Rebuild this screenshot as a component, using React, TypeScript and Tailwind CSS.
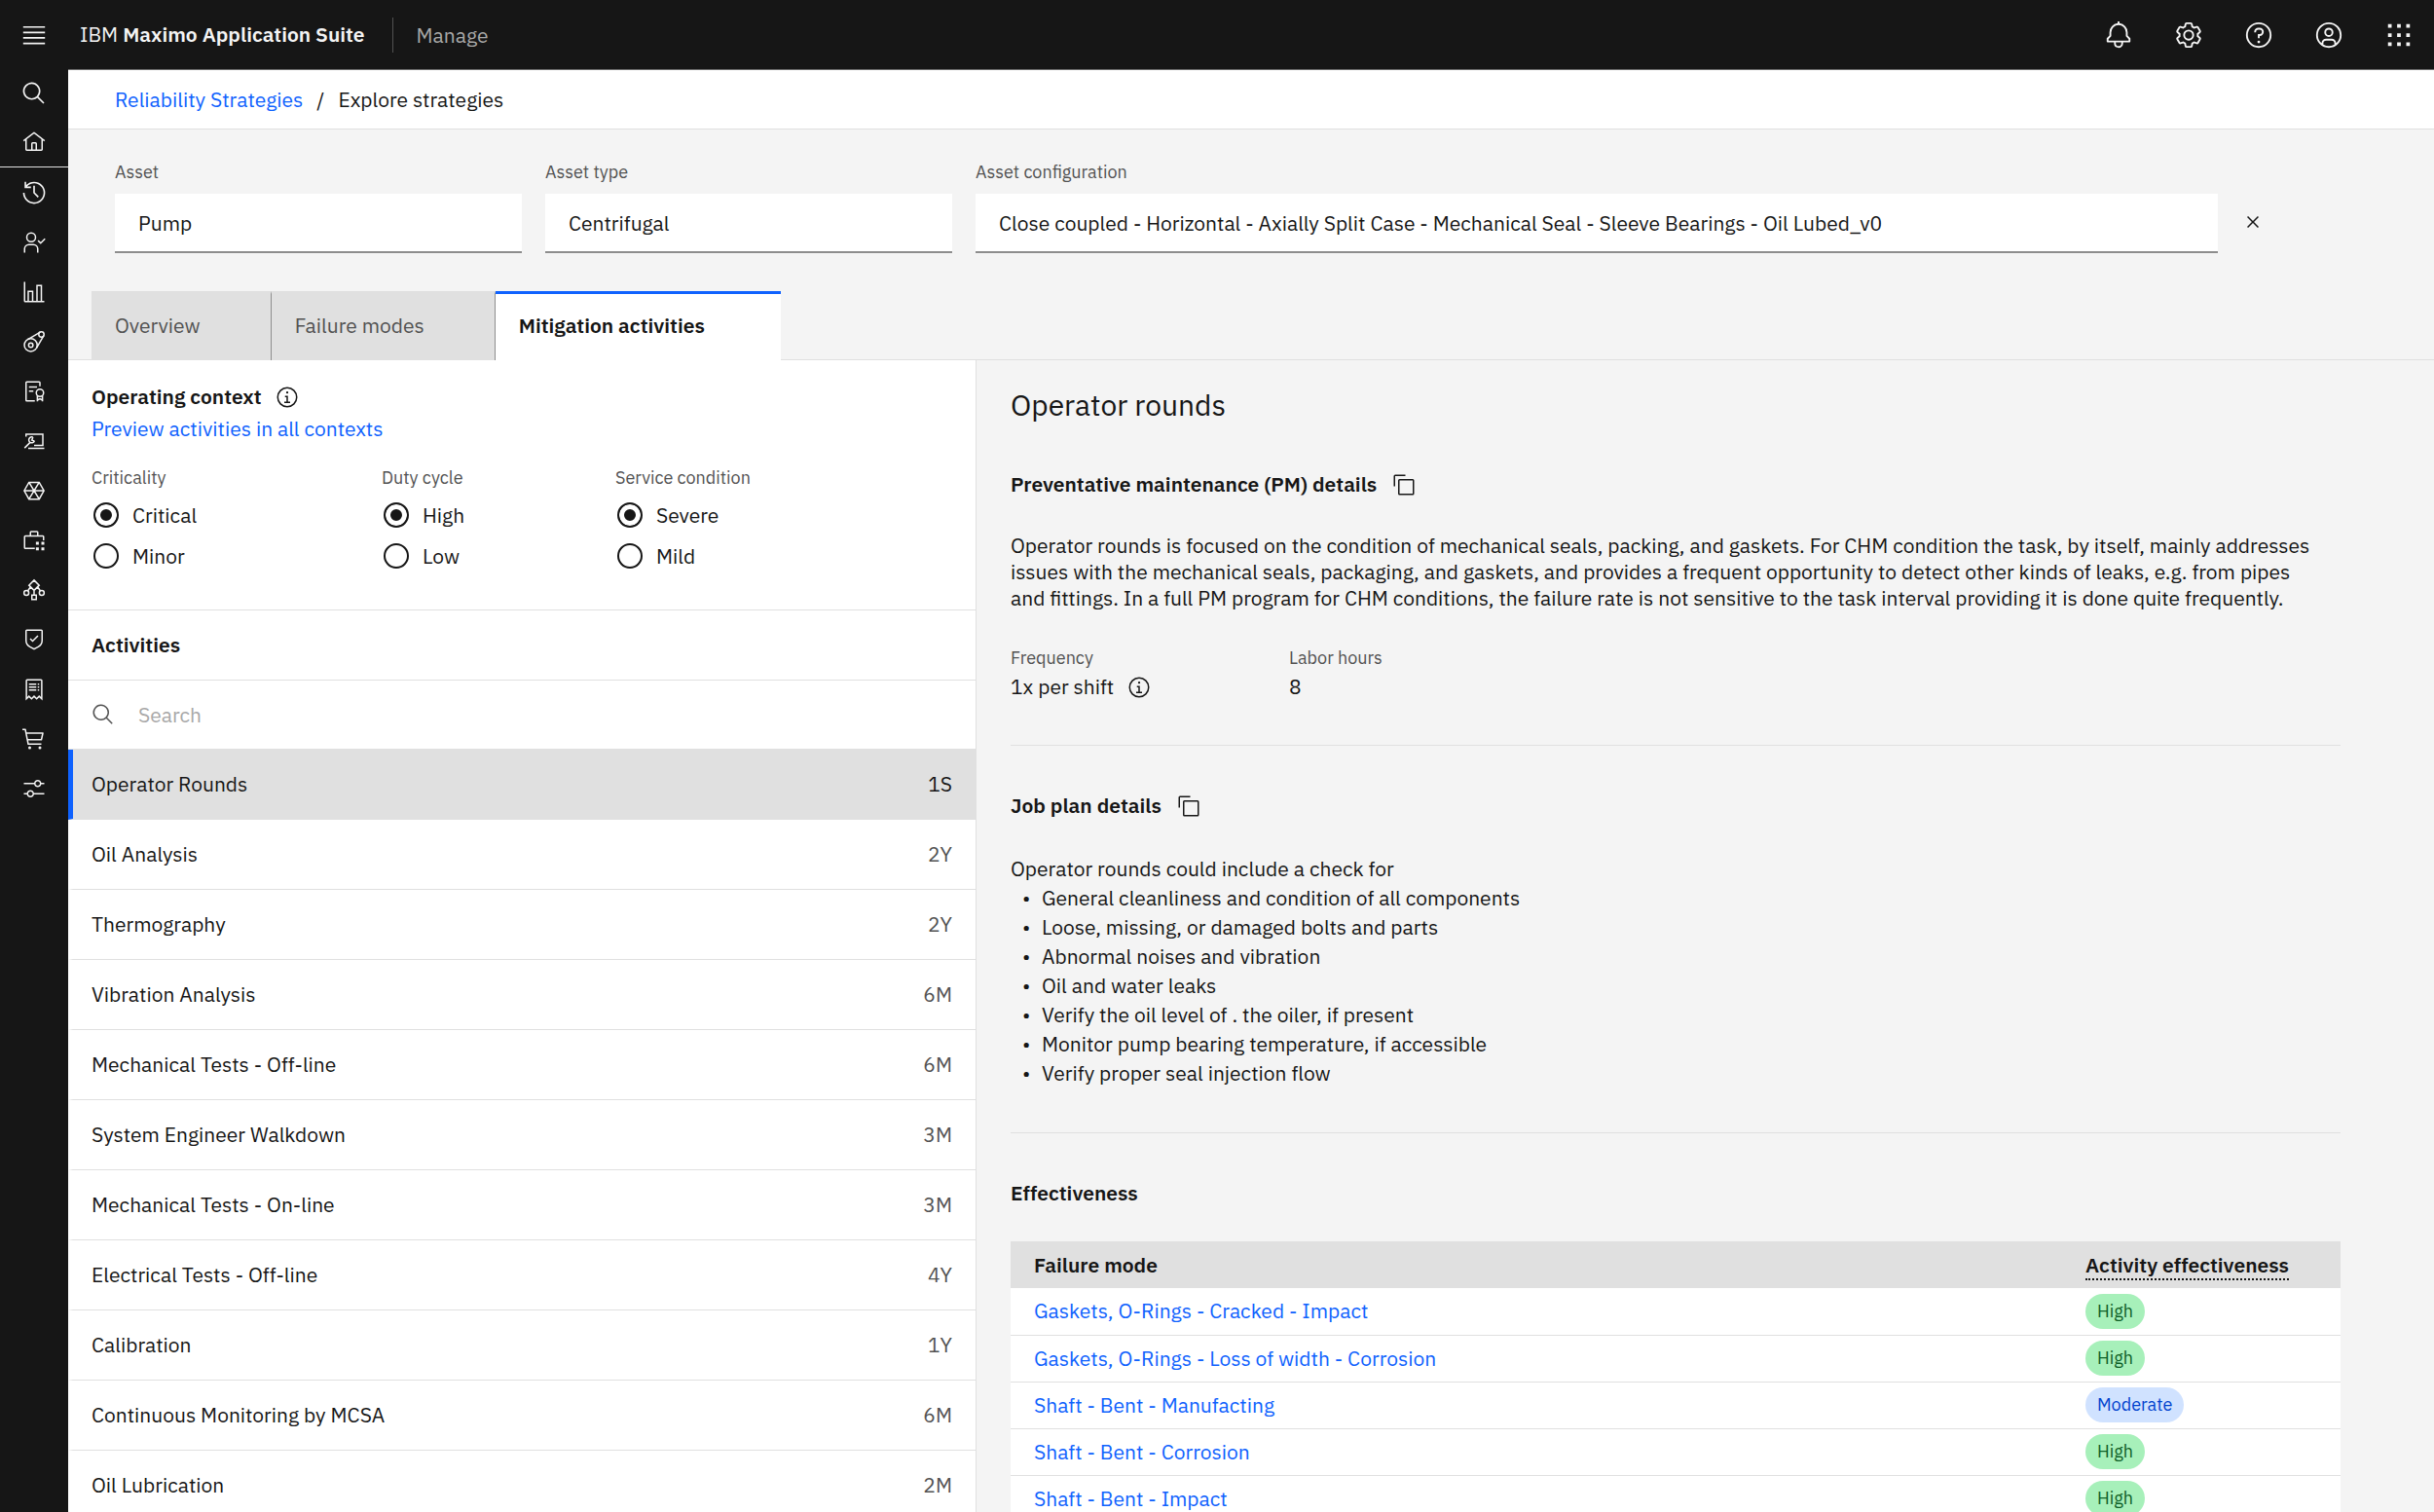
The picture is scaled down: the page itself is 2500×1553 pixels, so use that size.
import { useState } from "react";
import type { ReactNode } from "react";
import { clsx } from "clsx";

interface Activity {
  name: string;
  interval: string;
}

const activities: Activity[] = [
  { name: "Operator Rounds", interval: "1S" },
  { name: "Oil Analysis", interval: "2Y" },
  { name: "Thermography", interval: "2Y" },
  { name: "Vibration Analysis", interval: "6M" },
  { name: "Mechanical Tests - Off-line", interval: "6M" },
  { name: "System Engineer Walkdown", interval: "3M" },
  { name: "Mechanical Tests - On-line", interval: "3M" },
  { name: "Electrical Tests - Off-line", interval: "4Y" },
  { name: "Calibration", interval: "1Y" },
  { name: "Continuous Monitoring by MCSA", interval: "6M" },
  { name: "Oil Lubrication", interval: "2M" },
];

const checks = [
  "General cleanliness and condition of all components",
  "Loose, missing, or damaged bolts and parts",
  "Abnormal noises and vibration",
  "Oil and water leaks",
  "Verify the oil level of . the oiler, if present",
  "Monitor pump bearing temperature, if accessible",
  "Verify proper seal injection flow",
];

const failureModes = [
  { name: "Gaskets, O-Rings - Cracked - Impact", level: "High" },
  { name: "Gaskets, O-Rings - Loss of width - Corrosion", level: "High" },
  { name: "Shaft - Bent - Manufacting", level: "Moderate" },
  { name: "Shaft - Bent - Corrosion", level: "High" },
  { name: "Shaft - Bent - Impact", level: "High" },
];

const tabs = ["Overview", "Failure modes", "Mitigation activities"];

function Icon({ children, className = "size-6" }: { children: ReactNode; className?: string }) {
  return (
    <svg viewBox="0 0 32 32" fill="currentColor" aria-hidden="true" className={clsx("shrink-0", className)}>
      {children}
    </svg>
  );
}

function LineIcon({ children, className = "size-6" }: { children: ReactNode; className?: string }) {
  return (
    <svg
      viewBox="0 0 32 32"
      fill="none"
      stroke="currentColor"
      strokeWidth={2}
      aria-hidden="true"
      className={clsx("shrink-0", className)}
    >
      {children}
    </svg>
  );
}

function SearchIcon({ className }: { className?: string }) {
  return (
    <Icon className={className}>
      <path d="M29,27.5859l-7.5521-7.5521a11.0177,11.0177,0,1,0-1.4141,1.4141L27.5859,29ZM4,13a9,9,0,1,1,9,9A9.01,9.01,0,0,1,4,13Z" />
    </Icon>
  );
}

function InfoIcon() {
  return (
    <Icon>
      <path d="M17 22L17 14 13 14 13 16 15 16 15 22 12 22 12 24 20 24 20 22 17 22z" />
      <path d="M16,8a1.5,1.5,0,1,0,1.5,1.5A1.5,1.5,0,0,0,16,8Z" />
      <path d="M16,30A14,14,0,1,1,30,16,14,14,0,0,1,16,30ZM16,4A12,12,0,1,0,28,16,12,12,0,0,0,16,4Z" />
    </Icon>
  );
}

function CopyIcon() {
  return (
    <Icon>
      <path d="M28,10V28H10V10H28m0-2H10a2,2,0,0,0-2,2V28a2,2,0,0,0,2,2H28a2,2,0,0,0,2-2V10a2,2,0,0,0-2-2Z" />
      <path d="M4,18H2V4A2,2,0,0,1,4,2H18V4H4Z" />
    </Icon>
  );
}

const railItems: { label: string; icon: ReactNode }[] = [
  {
    label: "Recent",
    icon: (
      <Icon className="size-[26px]">
        <path d="M20.59 22L15 16.41 15 7 17 7 17 15.58 22 20.59 20.59 22z" />
        <path d="M16,2A13.94,13.94,0,0,0,6,6.23V2H4v8h8V8H7.08A12,12,0,1,1,4,16H2A14,14,0,1,0,16,2Z" />
      </Icon>
    ),
  },
  {
    label: "Assignments",
    icon: (
      <LineIcon>
        <circle cx="12" cy="9" r="6" />
        <path d="M3 30v-5a6 6 0 0 1 6-6h6a6 6 0 0 1 6 6v5M21.5 13.5l3.5 3.5 6-6" />
      </LineIcon>
    ),
  },
  {
    label: "Reports",
    icon: (
      <Icon>
        <path d="M27,28V6H19V28H15V14H7V28H4V2H2V28a2,2,0,0,0,2,2H30V28ZM13,28H9V16h4Zm12,0H21V8h4Z" />
      </Icon>
    ),
  },
  {
    label: "Assets",
    icon: (
      <LineIcon>
        <circle cx="11.5" cy="20.5" r="8.8" />
        <circle cx="11.5" cy="20.5" r="3" />
        <circle cx="26" cy="6" r="3.6" />
        <path d="M7.5 12.7L24.5 2.7M19.4 24.5L29.3 7.5" />
      </LineIcon>
    ),
  },
  {
    label: "Contracts",
    icon: (
      <LineIcon>
        <path d="M24 9V4a1 1 0 0 0-1-1H6a1 1 0 0 0-1 1v24a1 1 0 0 0 1 1h11M9 10h11M9 15.5h6" />
        <circle cx="24" cy="18" r="5" />
        <path d="M20.5 22v7.5M27.5 22v7.5M20.5 28l3.5-2 3.5 2" />
      </LineIcon>
    ),
  },
  {
    label: "Work orders",
    icon: (
      <LineIcon>
        <path d="M5 10V6.5h23V22H16M8 26h22M3 25.500l8-8" />
        <path d="M14.500 10.800a4 4 0 1 0 2 5.200M14.500 10.800l-1.500 4 3.500 1.200" />
      </LineIcon>
    ),
  },
  {
    label: "Inventory",
    icon: (
      <LineIcon>
        <path d="M2.5 16L9 4.5h14L29.5 16 23 27.5H9zM2.5 16h27M9 4.5l14 23M23 4.5l-14 23" />
      </LineIcon>
    ),
  },
  {
    label: "Tools",
    icon: (
      <LineIcon>
        <path d="M17 27H4a1 1 0 0 1-1-1V11a1 1 0 0 1 1-1h24a1 1 0 0 1 1 1v5M11 10V5a1 1 0 0 1 1-1h8a1 1 0 0 1 1 1v5" />
        <path d="M18.5 18h4v4h-4zM26 18h4v4h-4zM18.5 25.5h4v4h-4zM26 25.5h4v4h-4z" fill="currentColor" stroke="none" />
      </LineIcon>
    ),
  },
  {
    label: "Planning",
    icon: (
      <LineIcon>
        <path d="M16 2.5L23 9.5 16 16.5 9 9.5zM16 16.5V23M11 12L7.5 17M21 12l3.5 5M13 23h6v6h-6z" />
        <circle cx="5.5" cy="20" r="3.3" />
        <circle cx="26.5" cy="20" r="3.3" />
      </LineIcon>
    ),
  },
  {
    label: "Safety",
    icon: (
      <Icon>
        <path d="M14 16.59L11.41 14 10 15.41 14 19.41 22 11.41 20.59 10 14 16.59z" />
        <path d="M16,30,9.8242,26.7071A10.9815,10.9815,0,0,1,4,17V4A2.0021,2.0021,0,0,1,6,2H26a2.0021,2.0021,0,0,1,2,2V17a10.9815,10.9815,0,0,1-5.8242,9.7069ZM6,4V17a8.9852,8.9852,0,0,0,4.7656,7.9423L16,27.7333l5.2344-2.791A8.9852,8.9852,0,0,0,26,17V4Z" />
      </Icon>
    ),
  },
  {
    label: "Financial",
    icon: (
      <LineIcon>
        <path d="M5.5 29V4a1 1 0 0 1 1-1h19a1 1 0 0 1 1 1v25l-3.5-3.5-3.5 3.5-3.5-3.5-3.500 3.5-3.500-3.500z" />
        <path d="M9 9h10M9 13h10M9 17h10M21 9h2M21 13h2M21 17h2" />
      </LineIcon>
    ),
  },
  {
    label: "Purchasing",
    icon: (
      <Icon>
        <circle cx="10" cy="28" r="2" />
        <circle cx="24" cy="28" r="2" />
        <path d="M28,7H5.82L5,2.8A1,1,0,0,0,4,2H0V4H3.18L7,23.2A1,1,0,0,0,8,24H26V22H8.82L8,18H26a1,1,0,0,0,1-.78l2-9A1,1,0,0,0,28,7ZM25.2,16H7.62L6.22,9H26.75Z" />
      </Icon>
    ),
  },
  {
    label: "Administration",
    icon: (
      <Icon>
        <path d="M30 8h-4.1c-.5-2.3-2.5-4-4.9-4s-4.4 1.7-4.9 4H2v2h14.1c.5 2.3 2.5 4 4.9 4s4.4-1.7 4.9-4H30V8zM21 12c-1.7 0-3-1.3-3-3s1.3-3 3-3 3 1.3 3 3S22.7 12 21 12zM2 24h4.1c.5 2.3 2.5 4 4.9 4s4.4-1.7 4.9-4H30v-2H15.9c-.5-2.3-2.5-4-4.9-4s-4.4 1.7-4.9 4H2V24zM11 20c1.7 0 3 1.3 3 3s-1.3 3-3 3-3-1.3-3-3S9.3 20 11 20z" />
      </Icon>
    ),
  },
];

const headerActions: { label: string; icon: ReactNode }[] = [
  {
    label: "Notifications",
    icon: (
      <path d="M28.7071,19.293,26,16.5859V13a10.0136,10.0136,0,0,0-9-9.9492V1H15V3.0508A10.0136,10.0136,0,0,0,6,13v3.5859L3.2929,19.293A1,1,0,0,0,3,20v3a1,1,0,0,0,1,1h7v.7768a5.152,5.152,0,0,0,4.5,5.1987A5.0057,5.0057,0,0,0,21,25V24h7a1,1,0,0,0,1-1V20A1,1,0,0,0,28.7071,19.293ZM19,25a3,3,0,0,1-6,0V24h6Zm8-3H5V20.4141L7.707,17.707A1,1,0,0,0,8,17V13a8,8,0,0,1,16,0v4a1,1,0,0,0,.293.707L27,20.4141Z" />
    ),
  },
  {
    label: "Settings",
    icon: (
      <>
        <path d="M27,16.76c0-.25,0-.5,0-.76s0-.51,0-.77l1.92-1.68A2,2,0,0,0,29.3,11L26.94,7a2,2,0,0,0-1.73-1,2,2,0,0,0-.64.1l-2.43.82a11.35,11.35,0,0,0-1.31-.75l-.51-2.52a2,2,0,0,0-2-1.61H13.64a2,2,0,0,0-2,1.61l-.51,2.52a11.48,11.48,0,0,0-1.32.75L7.43,6.06A2,2,0,0,0,6.79,6,2,2,0,0,0,5.06,7L2.7,11a2,2,0,0,0,.41,2.51L5,15.24c0,.25,0,.5,0,.76s0,.51,0,.77L3.11,18.45A2,2,0,0,0,2.7,21L5.06,25a2,2,0,0,0,1.73,1,2,2,0,0,0,.64-.1l2.43-.82a11.35,11.35,0,0,0,1.31.75l.51,2.52a2,2,0,0,0,2,1.61h4.72a2,2,0,0,0,2-1.61l.51-2.52a11.48,11.48,0,0,0,1.32-.75l2.42.82a2,2,0,0,0,.64.1,2,2,0,0,0,1.73-1L29.3,21a2,2,0,0,0-.41-2.51ZM25.21,24l-3.43-1.16a8.86,8.86,0,0,1-2.71,1.57L18.36,28H13.64l-.71-3.55a9.36,9.36,0,0,1-2.7-1.57L6.79,24,4.43,20l2.72-2.4a8.9,8.9,0,0,1,0-3.13L4.43,12,6.79,8l3.43,1.16a8.86,8.86,0,0,1,2.71-1.57L13.64,4h4.72l.71,3.55a9.36,9.36,0,0,1,2.7,1.57L25.21,8,27.57,12l-2.72,2.4a8.9,8.9,0,0,1,0,3.13L27.57,20Z" />
        <path d="M16,22a6,6,0,1,1,6-6A5.94,5.94,0,0,1,16,22Zm0-10a3.91,3.91,0,0,0-4,4,3.91,3.91,0,0,0,4,4,3.91,3.91,0,0,0,4-4A3.91,3.91,0,0,0,16,12Z" />
      </>
    ),
  },
  {
    label: "Help",
    icon: (
      <>
        <path d="M16,2A14,14,0,1,0,30,16,14,14,0,0,0,16,2Zm0,26A12,12,0,1,1,28,16,12,12,0,0,1,16,28Z" />
        <circle cx="16" cy="23.5" r="1.5" />
        <path d="M17,8H15.5A4.49,4.49,0,0,0,11,12.5V13h2v-.5A2.5,2.5,0,0,1,15.5,10H17a2.5,2.5,0,0,1,0,5H15v4.5h2V17a4.5,4.5,0,0,0,0-9Z" />
      </>
    ),
  },
  {
    label: "Account",
    icon: (
      <>
        <path d="M16,8a5,5,0,1,0,5,5A5,5,0,0,0,16,8Zm0,8a3,3,0,1,1,3-3A3.0034,3.0034,0,0,1,16,16Z" />
        <path d="M16,2A14,14,0,1,0,30,16,14.0158,14.0158,0,0,0,16,2ZM10,26.3765V25a3.0033,3.0033,0,0,1,3-3h6a3.0033,3.0033,0,0,1,3,3v1.3765a11.8989,11.8989,0,0,1-12,0Zm13.9925-1.4507A5.0016,5.0016,0,0,0,19,20H13a5.0016,5.0016,0,0,0-4.9925,4.9258,12,12,0,1,1,15.985,0Z" />
      </>
    ),
  },
  {
    label: "App switcher",
    icon: (
      <path d="M14 4h4v4h-4zM4 4h4v4H4zM24 4h4v4h-4zM14 14h4v4h-4zM4 14h4v4H4zM24 14h4v4h-4zM14 24h4v4h-4zM4 24h4v4H4zM24 24h4v4h-4z" />
    ),
  },
];

function Field({ id, label, value, className }: { id: string; label: string; value: string; className?: string }) {
  return (
    <div className={className}>
      <label htmlFor={id} className="block text-lg leading-6 text-[#525252]">
        {label}
      </label>
      <input
        id={id}
        type="text"
        defaultValue={value}
        className="mt-[10px] h-[61px] w-full border-b-2 border-[#8d8d8d] bg-white px-6 outline-none focus:border-[#0f62fe]"
      />
    </div>
  );
}

function RadioGroup({ legend, options, className }: { legend: string; options: string[]; className?: string }) {
  const [value, setValue] = useState(options[0]);
  return (
    <fieldset className={className}>
      <legend className="text-lg leading-6 text-[#525252]">{legend}</legend>
      <div className="mt-3 flex flex-col gap-[14px]">
        {options.map((option) => (
          <label key={option} className="flex items-center gap-[14px] leading-7">
            <input
              type="radio"
              name={legend}
              checked={value === option}
              onChange={() => setValue(option)}
              className="ml-[2px] size-[26px] appearance-none rounded-full border-2 border-[#161616] checked:bg-[#161616] checked:shadow-[inset_0_0_0_5px_#fff]"
            />
            {option}
          </label>
        ))}
      </div>
    </fieldset>
  );
}

export default function App() {
  const [tab, setTab] = useState("Mitigation activities");
  const [selected, setSelected] = useState("Operator Rounds");
  const [query, setQuery] = useState("");

  const visible = activities.filter((a) => a.name.toLowerCase().includes(query.toLowerCase()));

  return (
    <div className="flex h-screen flex-col overflow-hidden bg-[#f4f4f4] font-['IBM_Plex_Sans','Roboto',sans-serif] text-[21px] leading-[27px] text-[#161616]">
      {/* Header */}
      <header className="flex h-[71px] shrink-0 items-center bg-[#161616] text-[#f4f4f4]">
        <button aria-label="Menu" className="flex w-[70px] justify-center">
          <svg viewBox="0 0 20 20" fill="currentColor" className="size-7">
            <path d="M2 15.5H18V16.7H2zM2 11.5H18V12.7H2zM2 7.5H18V8.7H2zM2 3.5H18V4.7H2z" />
          </svg>
        </button>
        <a href="#" className="pr-7 pl-3">
          IBM <span className="font-semibold">Maximo Application Suite</span>
        </a>
        <span className="h-9 border-l border-[#525252] pl-6 leading-9 text-[#a8a8a8]">Manage</span>
        <div className="ml-auto flex">
          {headerActions.map((action) => (
            <button key={action.label} aria-label={action.label} className="flex w-[72px] justify-center">
              <Icon className="size-[30px]">{action.icon}</Icon>
            </button>
          ))}
        </div>
      </header>

      <div className="flex min-h-0 flex-1">
        {/* Side rail */}
        <nav className="flex w-[70px] shrink-0 flex-col bg-[#161616] text-[#f4f4f4]">
          <button aria-label="Search" className="flex h-[50px] items-center justify-center">
            <SearchIcon className="size-[26px]" />
          </button>
          <button aria-label="Home" className="flex h-[50px] items-center justify-center">
            <Icon>
              <path d="M16.6123,2.2138a1.01,1.01,0,0,0-1.2427,0L1,13.4194l1.2427,1.5717L4,13.6209V26a2.0041,2.0041,0,0,0,2,2H26a2.0037,2.0037,0,0,0,2-2V13.63L29.7573,15,31,13.4282ZM18,26H14V18h4Zm2,0V18a2.0023,2.0023,0,0,0-2-2H14a2.002,2.002,0,0,0-2,2v8H6V12.0615l10-7.79,10,7.8005V26Z" />
            </Icon>
          </button>
          <div className="border-t border-[#e0e0e0]">
            {railItems.map((item) => (
              <button key={item.label} aria-label={item.label} className="flex h-[51px] w-full items-center justify-center">
                {item.icon}
              </button>
            ))}
          </div>
        </nav>

        <main className="flex min-w-0 flex-1 flex-col border-t border-[#6f6f6f]">
          <nav aria-label="Breadcrumb" className="flex h-[61px] shrink-0 items-center gap-[14px] border-b border-[#e0e0e0] bg-white px-12">
            <a href="#" className="text-[#0f62fe]">
              Reliability Strategies
            </a>
            <span>/</span>
            <span>Explore strategies</span>
          </nav>

          {/* Asset fields */}
          <div className="flex items-end gap-6 pt-8 pr-[174px] pl-12">
            <Field id="asset" label="Asset" value="Pump" className="w-[418px]" />
            <Field id="asset-type" label="Asset type" value="Centrifugal" className="w-[418px]" />
            <Field
              id="asset-configuration"
              label="Asset configuration"
              value="Close coupled - Horizontal - Axially Split Case - Mechanical Seal - Sleeve Bearings - Oil Lubed_v0"
              className="flex-1"
            />
            <button aria-label="Clear configuration" className="flex h-[61px] w-6 items-center pb-1">
              <Icon>
                <path d="M24 9.4L22.6 8 16 14.6 9.4 8 8 9.4 14.6 16 8 22.6 9.4 24 16 17.4 22.6 24 24 22.6 17.4 16 24 9.4z" />
              </Icon>
            </button>
          </div>

          {/* Tabs */}
          <div className="mt-[39px] border-b border-[#e0e0e0] px-6">
            <div role="tablist" className="-mb-px flex">
              {tabs.map((name) => (
                <button
                  key={name}
                  role="tab"
                  aria-selected={tab === name}
                  onClick={() => setTab(name)}
                  className={clsx(
                    "h-[71px] border-t-[3px] pb-1 pl-6 text-left",
                    tab === name
                      ? "border-t-[#0f62fe] bg-white pr-[78px] font-semibold"
                      : "border-r border-t-[#e0e0e0] border-r-[#8d8d8d] bg-[#e0e0e0] pr-[72px] text-[#525252]"
                  )}
                >
                  {name}
                </button>
              ))}
            </div>
          </div>

          <div className="flex min-h-0 flex-1">
            {/* Activities */}
            <section className="w-[933px] shrink-0 overflow-hidden border-r border-[#e0e0e0] bg-white">
              <div className="h-[257px] border-b border-[#e0e0e0] px-6 pt-6">
                <div className="flex items-center gap-[14px]">
                  <h2 className="font-semibold">Operating context</h2>
                  <button aria-label="About operating context">
                    <InfoIcon />
                  </button>
                </div>
                <a href="#" className="mt-[6px] block text-[#0f62fe]">
                  Preview activities in all contexts
                </a>
                <div className="mt-[25px] flex">
                  <RadioGroup legend="Criticality" options={["Critical", "Minor"]} className="w-[298px]" />
                  <RadioGroup legend="Duty cycle" options={["High", "Low"]} className="w-[240px]" />
                  <RadioGroup legend="Service condition" options={["Severe", "Mild"]} />
                </div>
              </div>
              <h2 className="flex h-[72px] items-center border-b border-[#e0e0e0] px-6 font-semibold">Activities</h2>
              <label className="flex h-[71px] items-center gap-6 border-b border-[#e0e0e0] px-6 text-[#525252]">
                <SearchIcon />
                <input
                  type="search"
                  aria-label="Search activities"
                  placeholder="Search"
                  value={query}
                  onChange={(e) => setQuery(e.target.value)}
                  className="flex-1 text-[#161616] outline-none placeholder:text-[#a8a8a8]"
                />
              </label>
              <ul>
                {visible.map((activity) => {
                  const active = activity.name === selected;
                  return (
                    <li key={activity.name}>
                      <button
                        onClick={() => setSelected(activity.name)}
                        className={clsx(
                          "flex h-[72px] w-full items-center justify-between border-b border-l-[5px] border-b-[#e0e0e0] pr-6 pl-[19px]",
                          active ? "border-l-[#0f62fe] bg-[#e0e0e0]" : "border-l-transparent"
                        )}
                      >
                        <span>{activity.name}</span>
                        <span className={active ? "text-[#161616]" : "text-[#525252]"}>{activity.interval}</span>
                      </button>
                    </li>
                  );
                })}
              </ul>
            </section>

            {/* Activity details */}
            <section className="min-w-0 flex-1 overflow-hidden pt-[26px] pr-24 pl-[35px]">
              <h1 className="text-[30px] leading-10">Operator rounds</h1>

              <div className="mt-12 flex items-center gap-4">
                <h2 className="font-semibold">Preventative maintenance (PM) details</h2>
                <button aria-label="Copy PM details">
                  <CopyIcon />
                </button>
              </div>
              <p className="mt-9 max-w-[1344px]">
                Operator rounds is focused on the condition of mechanical seals, packing, and gaskets. For CHM condition the
                task, by itself, mainly addresses issues with the mechanical seals, packaging, and gaskets, and provides a
                frequent opportunity to detect other kinds of leaks, e.g. from pipes and fittings. In a full PM program for CHM
                conditions, the failure rate is not sensitive to the task interval providing it is done quite frequently.
              </p>
              <dl className="mt-9 flex">
                <div className="w-[286px]">
                  <dt className="text-lg leading-6 text-[#525252]">Frequency</dt>
                  <dd className="mt-1 flex items-center gap-[14px]">
                    1x per shift
                    <button aria-label="About frequency">
                      <InfoIcon />
                    </button>
                  </dd>
                </div>
                <div>
                  <dt className="text-lg leading-6 text-[#525252]">Labor hours</dt>
                  <dd className="mt-1">8</dd>
                </div>
              </dl>

              <div className="mt-[46px] flex items-center gap-4 border-t border-[#e0e0e0] pt-12">
                <h2 className="font-semibold">Job plan details</h2>
                <button aria-label="Copy job plan details">
                  <CopyIcon />
                </button>
              </div>
              <div className="mt-9 leading-[30px]">
                <p>Operator rounds could include a check for</p>
                <ul className="pl-3">
                  {checks.map((check) => (
                    <li key={check} className="flex before:w-5 before:content-['•']">
                      {check}
                    </li>
                  ))}
                </ul>
              </div>

              <h2 className="mt-[46px] border-t border-[#e0e0e0] pt-12 font-semibold">Effectiveness</h2>
              <table className="mt-9 w-full text-left">
                <thead>
                  <tr className="h-12 bg-[#e0e0e0]">
                    <th className="pl-6 font-semibold">Failure mode</th>
                    <th className="w-[262px] font-semibold">
                      <span className="border-b-2 border-dotted border-[#161616]">Activity effectiveness</span>
                    </th>
                  </tr>
                </thead>
                <tbody>
                  {failureModes.map((mode) => (
                    <tr key={mode.name} className="h-12 border-b border-[#e0e0e0] bg-white">
                      <td className="pl-6">
                        <a href="#" className="text-[#0f62fe]">
                          {mode.name}
                        </a>
                      </td>
                      <td>
                        <span
                          className={clsx(
                            "inline-block rounded-full px-3 align-middle text-lg leading-9",
                            mode.level === "High" ? "bg-[#a7f0ba] text-[#0e6027]" : "bg-[#d0e2ff] text-[#0043ce]"
                          )}
                        >
                          {mode.level}
                        </span>
                      </td>
                    </tr>
                  ))}
                </tbody>
              </table>
            </section>
          </div>
        </main>
      </div>
    </div>
  );
}
